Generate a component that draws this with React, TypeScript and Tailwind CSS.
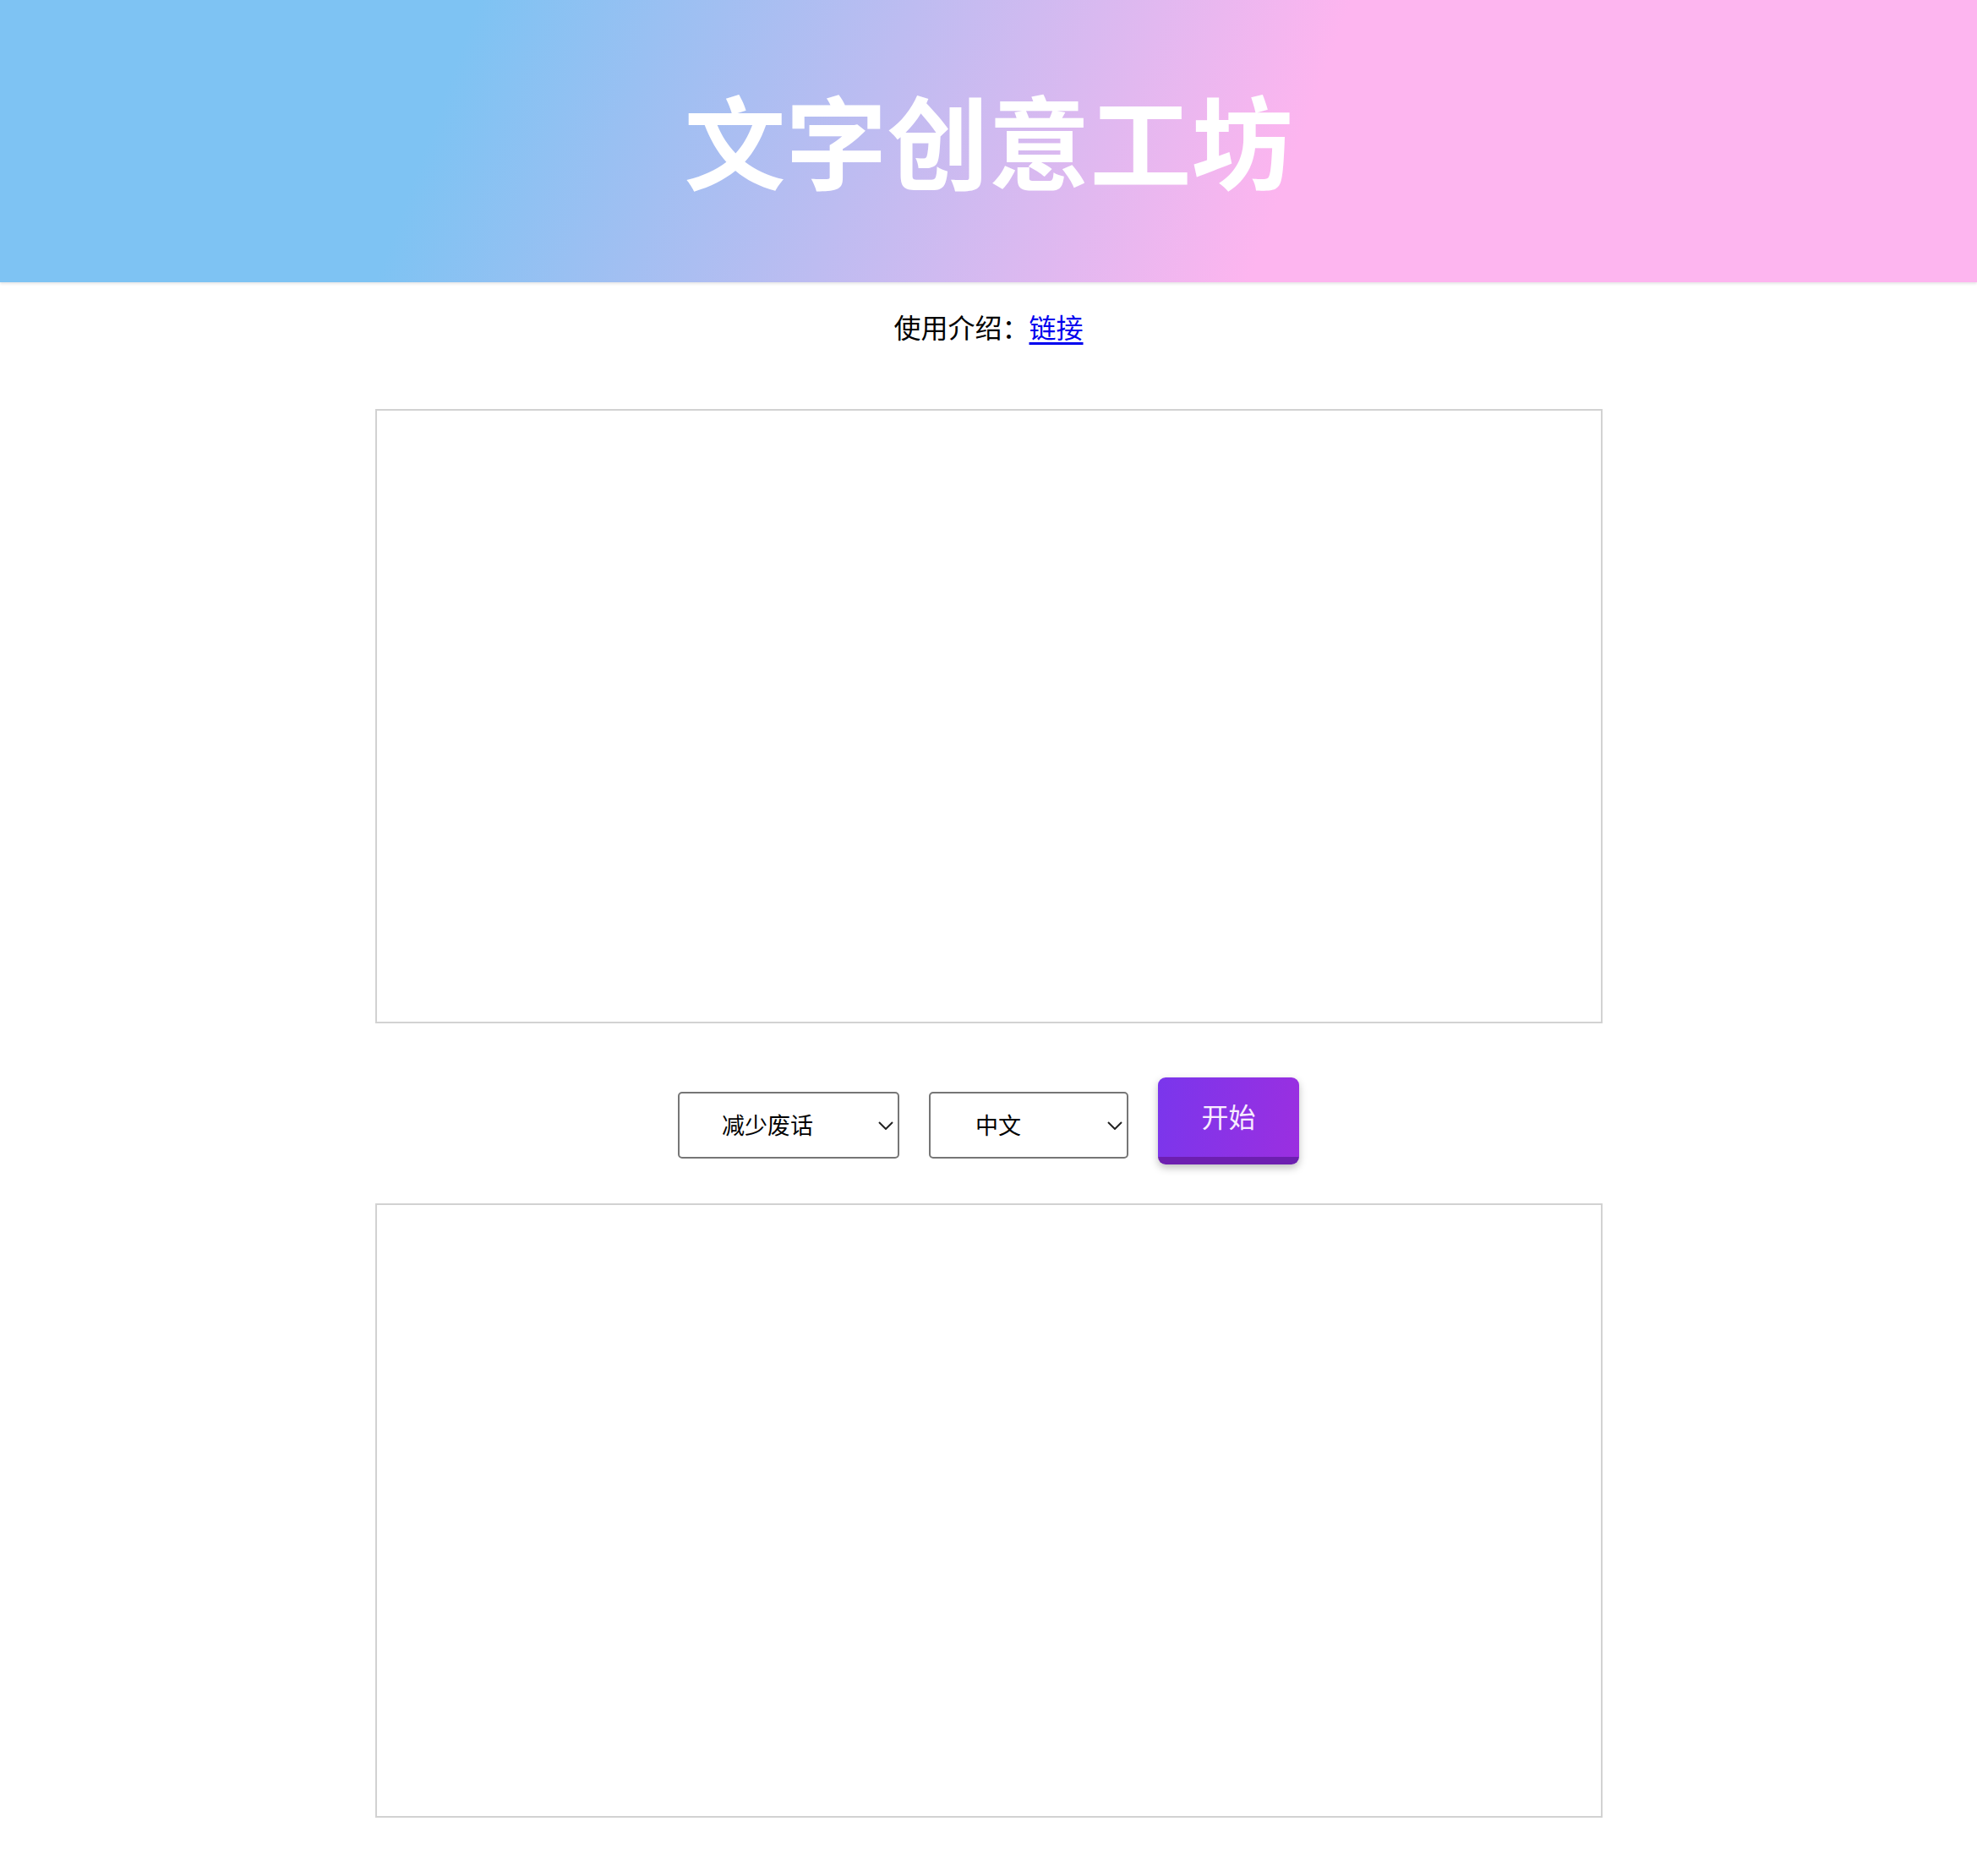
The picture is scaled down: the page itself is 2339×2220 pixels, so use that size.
import { useState } from "react";

const font = "font-['Noto_Sans_CJK_SC','Noto_Sans',sans-serif]";

function Chevron() {
  return (
    <svg
      width="18"
      height="10"
      viewBox="0 0 18 10"
      fill="none"
      stroke="#222"
      strokeWidth="2"
      className="pointer-events-none absolute right-[7px] top-1/2 -translate-y-1/2"
      aria-hidden
    >
      <path d="M1 1l8 8 8-8" />
    </svg>
  );
}

export default function App() {
  const [mode, setMode] = useState("reduce");
  const [lang, setLang] = useState("zh");

  return (
    <div className={`min-h-[2220px] bg-white ${font}`}>
      <header className="flex h-[334px] items-center justify-center bg-[linear-gradient(110deg,#7ec3f3_23%,#fdb5ef_65%)] pb-[6px] shadow-[0_2px_3px_rgba(0,0,0,0.1)]">
        <h1 className="text-[120px] font-bold leading-none text-white">文字创意工坊</h1>
      </header>

      <p className="mt-[28px] text-center text-[32px] leading-[48px] text-black">
        使用介绍：
        <a href="#" className="text-[#0000ee] underline underline-offset-[5px]">
          链接
        </a>
      </p>

      <div className="mx-auto mt-[74px] w-[1452px]">
        <textarea className="block h-[727px] w-full resize-none border-2 border-[#d2d2d2] p-3 text-[26px] outline-none" />
      </div>

      <div className="mt-[64px] flex items-start justify-center gap-[35px]">
        <div className="relative mt-[17px]">
          <select
            value={mode}
            onChange={(e) => setMode(e.target.value)}
            className="h-[79px] w-[262px] appearance-none rounded-[5px] border-2 border-[#767676] bg-white pl-[50px] text-[27px] text-black outline-none"
          >
            <option value="reduce">减少废话</option>
            <option value="expand">扩写内容</option>
            <option value="polish">润色文字</option>
          </select>
          <Chevron />
        </div>

        <div className="relative mt-[17px]">
          <select
            value={lang}
            onChange={(e) => setLang(e.target.value)}
            className="h-[79px] w-[236px] appearance-none rounded-[5px] border-2 border-[#767676] bg-white pl-[53px] text-[27px] text-black outline-none"
          >
            <option value="zh">中文</option>
            <option value="en">English</option>
          </select>
          <Chevron />
        </div>

        <button
          type="button"
          className="h-[103px] w-[167px] rounded-[9px] border-b-[9px] border-[#6d1fb0] bg-[linear-gradient(100deg,#7a36ec,#9b2fe0)] pb-[4px] text-[32px] text-[#f7ecff] shadow-[0_4px_10px_rgba(0,0,0,0.25)]"
        >
          开始
        </button>
      </div>

      <div className="mx-auto mt-[46px] w-[1452px]">
        <textarea className="block h-[727px] w-full resize-none border-2 border-[#d2d2d2] p-3 text-[26px] outline-none" />
      </div>
    </div>
  );
}
